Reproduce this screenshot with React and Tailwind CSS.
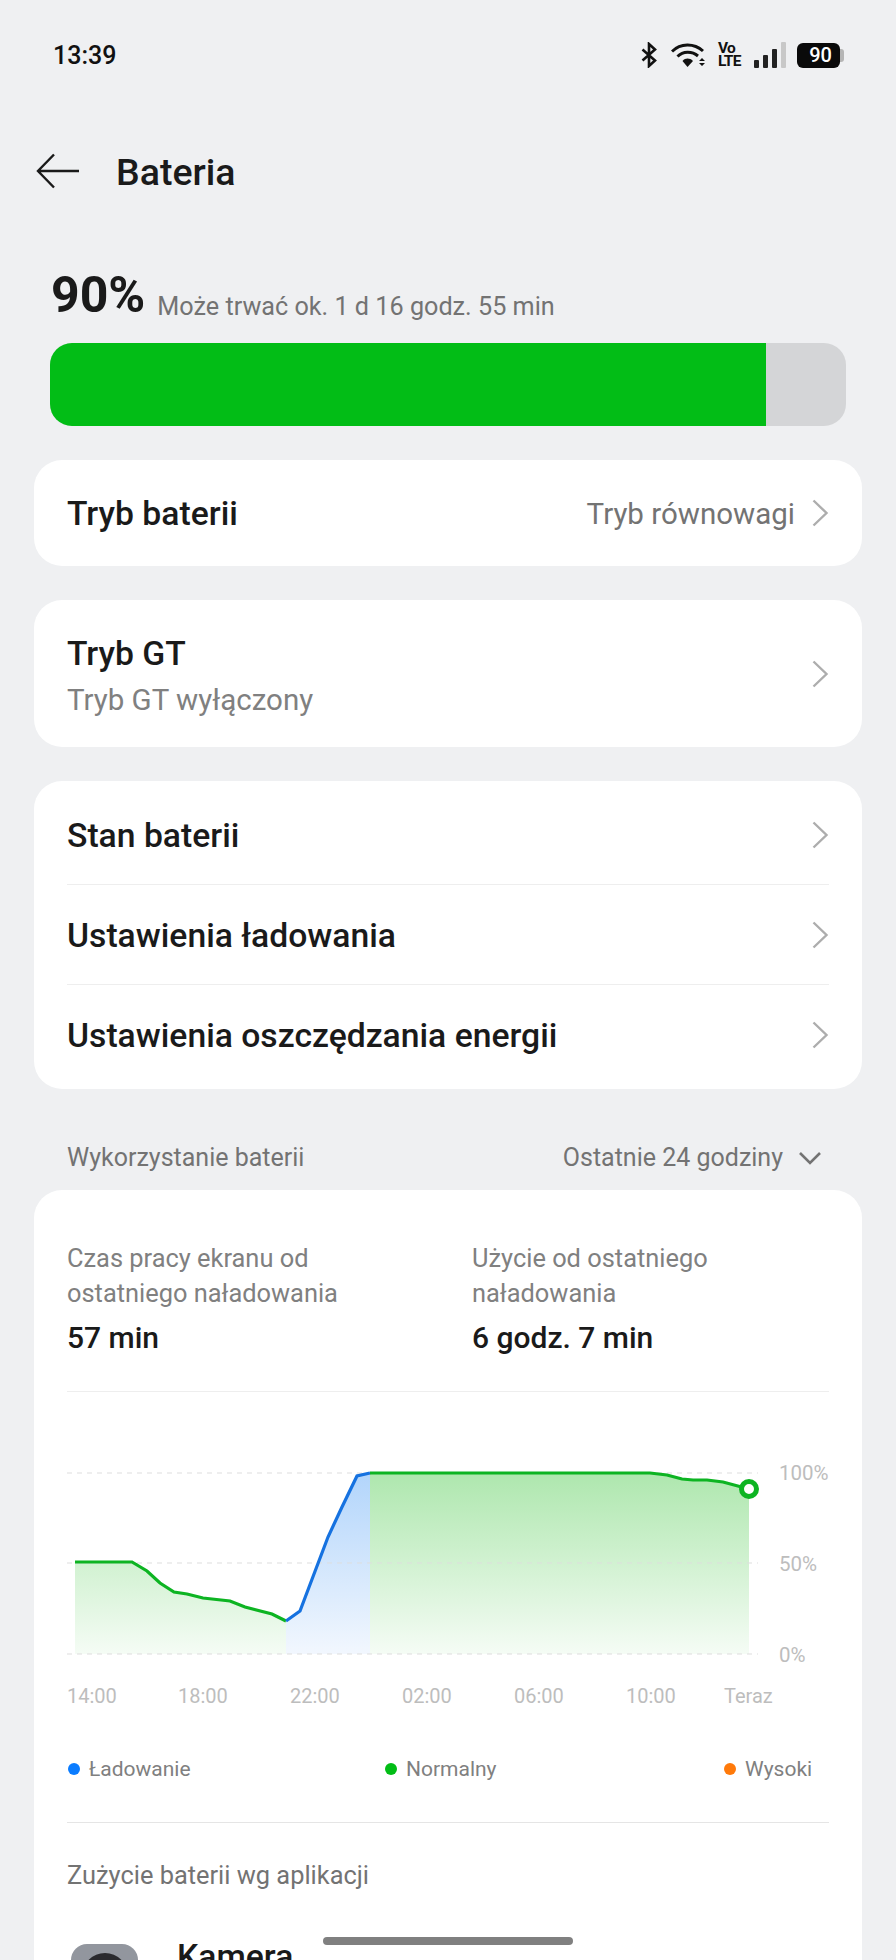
const Chevron = () => (
  <svg width="18" height="28" viewBox="0 0 18 28" fill="none" className="shrink-0">
    <path d="M2.5 1.5L15.5 14L2.5 26.5" stroke="#adadad" strokeWidth="2.4" />
  </svg>
);

const Row = ({ title, value, border }) => (
  <div className="flex h-[100px] items-center justify-between relative">
    <span className="pt-[3px] text-[33.7px] font-medium text-[#1a1a1a]">{title}</span>
    <div className="flex items-center gap-4">
      {value && <span className="pt-[3px] text-[29.5px] text-[#737373]">{value}</span>}
      <Chevron />
    </div>
    {border && <div className="absolute bottom-0 left-0 right-0 h-px bg-[#eeeeee]"></div>}
  </div>
);

const StatusIcons = () => (
  <div className="flex items-center">
    <svg width="16" height="26" viewBox="0 0 16 26" fill="none" className="mr-[14px]">
      <path d="M1.5 7.5L14 18.5L8 24V2L14 7.5L1.5 18.5" stroke="#111" strokeWidth="2.6" />
    </svg>
    <svg width="36" height="26" viewBox="0 0 36 26" fill="none" className="mr-[11px]">
      <path d="M1 9.5C9.5 1 23 1 32 9" stroke="#111" strokeWidth="3" />
      <path d="M6.5 14.5C12 9 21 9 27 14" stroke="#111" strokeWidth="3" />
      <path d="M11.5 19C14.5 15.8 18.5 15.8 22 19L16.5 25Z" fill="#111" />
      <path d="M28 19L31 16L34 19ZM28 21H34L31 24Z" fill="#111" />
    </svg>
    <div className="mr-3 flex w-[24px] flex-col items-start text-[15.5px] leading-[13px] font-bold tracking-[-0.8px] text-[#111]">
      <span>Vo</span>
      <span>LTE</span>
    </div>
    <div className="mr-[11px] flex h-[26px] items-end gap-[4px]">
      <div className="h-[8px] w-[5px] rounded-[1px] bg-[#222]"></div>
      <div className="h-[13px] w-[5px] rounded-[1px] bg-[#222]"></div>
      <div className="h-[19px] w-[5px] rounded-[1px] bg-[#222]"></div>
      <div className="h-[26px] w-[5px] rounded-[1px] bg-[#c8c8c8]"></div>
    </div>
    <div className="flex items-center">
      <div className="flex h-[25px] w-[43px] items-center justify-center rounded-[6px] bg-[#0a0a0a] pl-1 text-[20px] font-medium text-white">
        90
      </div>
      <div className="h-[13px] w-[4px] rounded-r-[3px] bg-[#b5b5b5]"></div>
    </div>
  </div>
);

const greenLeft = "75,1562 132,1562 147,1571 160,1583 174,1592 187,1594 203,1598 230,1601 245,1607 272,1614 286,1621";
const blueMid = "286,1621 300,1611 328,1537 342,1507 357,1476 370,1473";
const greenRight = "370,1473 650,1473 667,1475 682,1479 693,1480 707,1480 723,1482 749,1489";

const Chart = () => (
  <svg width="692" height="204" viewBox="67 1460 692 204" fill="none" className="shrink-0">
    <defs>
      <linearGradient id="greenFill" gradientUnits="userSpaceOnUse" x1="0" y1="1473" x2="0" y2="1654">
        <stop offset="0" stopColor="#aee7ae" />
        <stop offset="1" stopColor="#f5fcf5" />
      </linearGradient>
      <linearGradient id="blueFill" gradientUnits="userSpaceOnUse" x1="0" y1="1473" x2="0" y2="1654">
        <stop offset="0" stopColor="#b2d5fb" />
        <stop offset="1" stopColor="#f2f7fe" />
      </linearGradient>
    </defs>
    <polygon points={`${greenLeft} 286,1654 75,1654`} fill="url(#greenFill)" />
    <polygon points={`${blueMid} 370,1654 286,1654`} fill="url(#blueFill)" />
    <polygon points={`${greenRight} 749,1654 370,1654`} fill="url(#greenFill)" />
    {[1473, 1563, 1654].map((y) => (
      <line key={y} x1="67" x2="758" y1={y} y2={y} stroke="#dddddd" strokeWidth="1" strokeDasharray="5 5" />
    ))}
    <polyline points={greenLeft} stroke="#0db422" strokeWidth="3.2" />
    <polyline points={blueMid} stroke="#1672e0" strokeWidth="3.2" />
    <polyline points={greenRight} stroke="#0db422" strokeWidth="3.2" />
    <circle cx="749" cy="1489" r="7.5" fill="#fff" stroke="#0db422" strokeWidth="5" />
  </svg>
);

export default function App() {
  return (
    <div className="relative h-[1960px] w-[896px] overflow-hidden bg-[#eff0f2] font-[Roboto,sans-serif]">
      {/* Status bar */}
      <div className="flex h-[110px] items-center justify-between pl-[53px] pr-[52px]">
        <span className="pt-[2px] text-[25px] font-medium text-[#111]">13:39</span>
        <StatusIcons />
      </div>

      {/* Header */}
      <div className="flex h-[122px] items-center pl-[36px]">
        <svg width="44" height="36" viewBox="0 0 44 36" fill="none" className="mr-[36px]">
          <path d="M18 1.5L2 18L18 34.5M2 18H43" stroke="#1a1a1a" strokeWidth="2.4" />
        </svg>
        <span className="pt-[2px] text-[37.5px] font-medium text-[#1a1a1a]">Bateria</span>
      </div>

      {/* Battery level */}
      <div className="flex h-[111px] items-end gap-[12px] pb-[20px] pl-[51px]">
        <span className="text-[50px] leading-[56px] font-bold text-[#1a1a1a]">90%</span>
        <span className="-mb-[2px] text-[25.2px] leading-[36px] text-[#737373]">Może trwać ok. 1 d 16 godz. 55 min</span>
      </div>
      <div className="mx-[50px] flex h-[83px] overflow-hidden rounded-[22px] bg-[#d4d5d7]">
        <div className="h-full w-[716px] bg-[#02bd16]"></div>
      </div>

      <div className="mx-[34px] mt-[34px] flex flex-col gap-[34px]">
        <div className="rounded-[28px] bg-white px-[33px] py-[3px]">
          <Row title="Tryb baterii" value="Tryb równowagi" />
        </div>

        <div className="flex h-[147px] items-center justify-between rounded-[28px] bg-white px-[33px]">
          <div className="flex flex-col pt-[6px]">
            <span className="text-[33.7px] leading-[46px] font-medium text-[#1a1a1a]">Tryb GT</span>
            <span className="text-[29.5px] leading-[46px] text-[#808080]">Tryb GT wyłączony</span>
          </div>
          <Chevron />
        </div>

        <div className="rounded-[28px] bg-white px-[33px] py-[4px]">
          <Row title="Stan baterii" border />
          <Row title="Ustawienia ładowania" border />
          <Row title="Ustawienia oszczędzania energii" />
        </div>
      </div>

      {/* Usage section */}
      <div className="mx-[67px] flex h-[101px] items-center justify-between pt-[36px]">
        <span className="text-[25px] text-[#737373]">Wykorzystanie baterii</span>
        <div className="flex items-center gap-[15px]">
          <span className="text-[25px] text-[#737373]">Ostatnie 24 godziny</span>
          <svg width="24" height="16" viewBox="0 0 24 16" fill="none" className="mr-[7px]">
            <path d="M2 3L12 13L22 3" stroke="#737373" strokeWidth="2.6" />
          </svg>
        </div>
      </div>

      <div className="mx-[34px] h-[900px] rounded-[28px] bg-white px-[33px]">
        <div className="grid grid-cols-[405px_1fr] border-b border-[#eeeeee] pt-[51px] pb-[36px]">
          <div>
            <p className="text-[25.4px] leading-[35px] text-[#808080]">Czas pracy ekranu od<br />ostatniego naładowania</p>
            <p className="mt-[10px] text-[30px] leading-[34px] font-medium text-[#1a1a1a]">57 min</p>
          </div>
          <div>
            <p className="text-[25.4px] leading-[35px] text-[#808080]">Użycie od ostatniego<br />naładowania</p>
            <p className="mt-[10px] text-[30px] leading-[34px] font-medium text-[#1a1a1a]">6 godz. 7 min</p>
          </div>
        </div>

        {/* Chart */}
        <div className="flex pt-[68px]">
          <Chart />
          <div className="ml-[20px] flex h-[208px] flex-col justify-between text-[20.5px] leading-[26px] text-[#bdbdbd]">
            <span>100%</span>
            <span>50%</span>
            <span>0%</span>
          </div>
        </div>
        <div className="mt-[15px] grid grid-cols-[111px_112px_112px_112px_112px_98px_auto] text-[20px] leading-[26px] text-[#bdbdbd]">
          <span>14:00</span>
          <span>18:00</span>
          <span>22:00</span>
          <span>02:00</span>
          <span>06:00</span>
          <span>10:00</span>
          <span>Teraz</span>
        </div>

        {/* Legend */}
        <div className="mt-[46px] grid grid-cols-[317px_339px_auto] pb-[39px] pl-[1px] text-[21px] leading-[28px] text-[#808080]">
          <div className="flex items-center gap-[9px]"><span className="size-[12px] rounded-full bg-[#0a7cff]"></span>Ładowanie</div>
          <div className="flex items-center gap-[9px]"><span className="size-[12px] rounded-full bg-[#02bd16]"></span>Normalny</div>
          <div className="flex items-center gap-[9px]"><span className="size-[12px] rounded-full bg-[#ff7a0a]"></span>Wysoki</div>
        </div>
        <div className="h-px bg-[#e5e5e5]"></div>

        <p className="mt-[36px] text-[25.4px] leading-[32px] text-[#737373]">Zużycie baterii wg aplikacji</p>

        <div className="mt-[53px] ml-[4px] flex items-start gap-[39px]">
          <div className="flex h-[67px] w-[67px] justify-center rounded-[16px] bg-[#92969e] pt-[9px]">
            <div className="size-[46px] rounded-full bg-[#2a2a2e]"></div>
          </div>
          <span className="-mt-[7px] text-[33.7px] leading-[40px] font-medium text-[#1a1a1a]">Kamera</span>
        </div>
      </div>

      {/* Home indicator */}
      <div className="absolute bottom-[15px] left-[323px] h-[8px] w-[250px] rounded-full bg-[#808080]"></div>
    </div>
  );
}
